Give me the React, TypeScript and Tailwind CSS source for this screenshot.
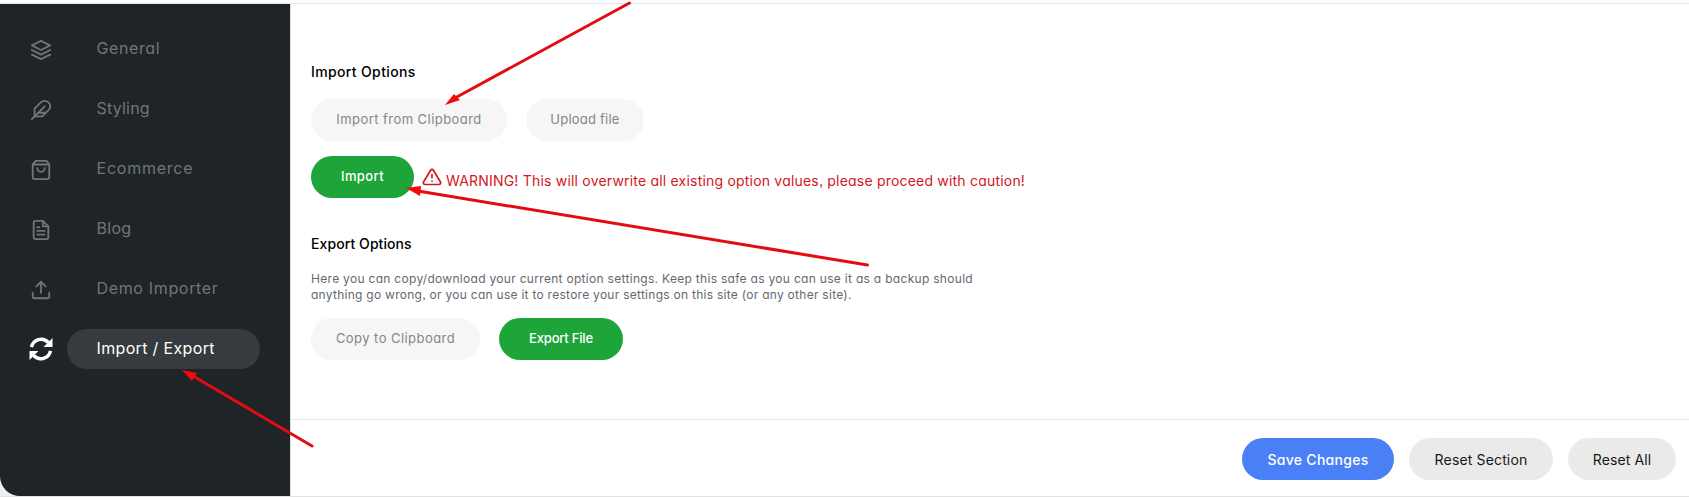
import React from "react";

const ink = "fill-none stroke-current stroke-2 [stroke-linecap:round] [stroke-linejoin:round]";

function Glyph({ children }: { children: React.ReactNode }) {
  return (
    <svg viewBox="0 0 24 24" className={`size-[22px] ${ink}`}>
      {children}
    </svg>
  );
}

const items = [
  {
    label: "General",
    spacing: "tracking-[0.6px]",
    icon: (
      <Glyph>
        <path d="M12 2 2 7l10 5 10-5-10-5z" />
        <path d="m2 17 10 5 10-5" />
        <path d="m2 12 10 5 10-5" />
      </Glyph>
    ),
  },
  {
    label: "Styling",
    spacing: "tracking-[0.2px]",
    icon: (
      <Glyph>
        <path d="M20.24 12.24a6 6 0 0 0-8.49-8.49L5 10.5V19h8.5z" />
        <path d="M16 8 2 22" />
        <path d="M17.5 15H9" />
      </Glyph>
    ),
  },
  {
    label: "Ecommerce",
    spacing: "tracking-[0.76px]",
    icon: (
      <Glyph>
        <path d="M6 2 3 6v14a2 2 0 0 0 2 2h14a2 2 0 0 0 2-2V6l-3-4z" />
        <path d="M3 6h18" />
        <path d="M16 10a4 4 0 0 1-8 0" />
      </Glyph>
    ),
  },
  {
    label: "Blog",
    spacing: "tracking-[0.3px]",
    icon: (
      <Glyph>
        <path d="M14 2H6a2 2 0 0 0-2 2v16a2 2 0 0 0 2 2h12a2 2 0 0 0 2-2V8z" />
        <path d="M14 2v6h6M16 13H8M16 17H8M10 9H8" />
      </Glyph>
    ),
  },
  {
    label: "Demo Importer",
    spacing: "tracking-[0.66px]",
    icon: (
      <Glyph>
        <path d="M21 15v4a2 2 0 0 1-2 2H5a2 2 0 0 1-2-2v-4" />
        <path d="m17 8-5-5-5 5M12 3v12" />
      </Glyph>
    ),
  },
];

function Pill({ className, children }: { className: string; children: React.ReactNode }) {
  return (
    <button className={`flex h-[42px] shrink-0 items-center justify-center whitespace-nowrap rounded-full ${className}`}>
      {children}
    </button>
  );
}

export default function App() {
  return (
    <div className="relative flex h-[497px] w-[1689px] flex-col overflow-hidden bg-white font-['Inter',sans-serif] [font-feature-settings:'cv11','ss03']">
      <div className="h-1 shrink-0 border-b border-[#e2e4e7]" />
      <div className="flex h-[493px] border-b border-[#e2e2e2] bg-[#f0f0f1]">
        <nav className="w-[290px] shrink-0 rounded-bl-[20px] bg-[#1f2427] pt-[15px]">
          {items.map((item) => (
            <a key={item.label} className="flex h-[60px] items-center text-[#727577]">
              <span className="ml-[30px] mt-[2px] w-[66.500px]">{item.icon}</span>
              <span className={`pb-[2px] text-[16px] ${item.spacing}`}>{item.label}</span>
            </a>
          ))}
          <a className="flex h-[60px] items-center text-white">
            <svg viewBox="0 0 24 24" className="ml-[29px] size-6 fill-current">
              <path
                d="M2.500 10.200A9.800 9.800 0 0 1 19.300 5.500M21.500 13.800A9.800 9.800 0 0 1 4.700 18.500"
                className="fill-none stroke-current stroke-[3.400]"
              />
              <path d="M23.500 1v9h-9zM.5 23v-9h9z" />
            </svg>
            <span className="ml-[14px] flex h-10 w-[193px] items-center rounded-full bg-[#353b3e] pb-[2px] pl-[29.500px] text-[16px] tracking-[0.34px]">
              Import / Export
            </span>
          </a>
        </nav>
        <main className="flex grow flex-col border-l border-[#ddd] bg-white">
          <div className="flex h-[416px] flex-col border-b border-[#e2e4e7] pl-[20px] pt-[58px]">
            <h2 className="h-5 text-[14px] font-medium leading-5 tracking-[0.36px] text-black">Import Options</h2>
            <div className="mt-[17px] flex gap-[19px] text-[13px] text-[#858585]">
              <Pill className="w-[196px] bg-[#f6f6f6] tracking-[0.45px]">Import from Clipboard</Pill>
              <Pill className="w-[118px] bg-[#f6f6f6] tracking-[0.22px]">Upload file</Pill>
            </div>
            <div className="mt-[15px] flex">
              <Pill className="w-[103px] bg-[#1ea53a] text-[13px] font-medium tracking-[0.4px] text-white">Import</Pill>
              <svg viewBox="0 0 24 24" className={`ml-[8px] mt-[11px] size-[20px] ${ink} text-[#d2161e]`}>
                <path d="M10.290 3.860 1.820 18a2 2 0 0 0 1.710 3h16.940a2 2 0 0 0 1.710-3L13.710 3.860a2 2 0 0 0-3.420 0zM12 9v4M12 17h.01" />
              </svg>
              <span className="ml-[4px] mt-[15px] whitespace-nowrap text-[14px] leading-5 tracking-[0.2px] text-[#d2161e]">
                WARNING! This will overwrite all existing option values, please proceed with caution!
              </span>
            </div>
            <h2 className="mt-[36px] h-5 text-[14px] font-medium leading-5 tracking-[0.08px] text-black">Export Options</h2>
            <p className="mt-[17px] whitespace-nowrap text-[12px] leading-4 text-[#646970]">
              <span className="tracking-[0.3px]">Here you can copy/download your current option settings. Keep this safe as you can use it as a backup should</span>
              <br />
              <span className="tracking-[0.27px]">anything go wrong, or you can use it to restore your settings on this site (or any other site).</span>
            </p>
            <div className="mt-[15px] flex gap-[19px] text-[13px]">
              <Pill className="w-[169px] bg-[#f6f6f6] tracking-[0.44px] text-[#858585]">Copy to Clipboard</Pill>
              <Pill className="w-[124px] bg-[#1ea53a] font-medium tracking-[-0.2px] text-white">Export File</Pill>
            </div>
          </div>
          <div className="flex justify-end gap-[15px] pr-[13px] pt-[18px] text-[14px] text-[#171717]">
            <Pill className="w-[152px] bg-[#4a80f5] font-medium tracking-[0.28px] text-white">Save Changes</Pill>
            <Pill className="w-[144px] bg-[#eaeaea] tracking-[0.15px]">Reset Section</Pill>
            <Pill className="w-[108px] bg-[#eaeaea] tracking-[0.1px]">Reset All</Pill>
          </div>
        </main>
      </div>
      <svg viewBox="0 0 1689 497" className="pointer-events-none absolute inset-0 size-full fill-[#f5090d] stroke-[#e40c12] [stroke-linecap:round]">
        <g strokeWidth="3">
          <path d="M629.500 3 455 98M867.500 265 418 191M312 446 193 376" />
        </g>
        <g stroke="none">
          <path d="m445 105 9-11 6 6zM406 188l15-2-1 10zM182 370l15 3-5 8z" />
        </g>
      </svg>
    </div>
  );
}
